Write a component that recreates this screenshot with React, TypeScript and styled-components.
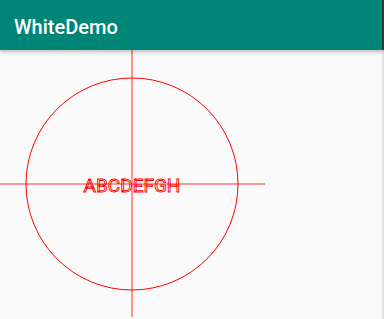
import React from "react";
import styled, { createGlobalStyle } from "styled-components";

const Global = createGlobalStyle`
  html, body { margin: 0; padding: 0; background: #fafafa; }
  body { font-family: Roboto, "Noto Sans", sans-serif; overflow: hidden; }
`;

const Screen = styled.div`
  width: 384px;
  height: 319px;
  display: flex;
  flex-direction: column;
  background: #fafafa;
  overflow: hidden;
`;

const Toolbar = styled.header`
  height: 50px;
  flex: none;
  display: flex;
  align-items: center;
  padding-left: 14px;
  background: #008577;
  border-right: 2px solid #2e3b38;
  box-shadow: 0 2px 4px rgba(0, 0, 0, 0.25);
  position: relative;
  z-index: 1;
`;

const Title = styled.h1`
  margin: 0;
  font-family: Roboto, "Noto Sans", sans-serif;
  font-weight: 500;
  font-size: 20px;
  line-height: 1;
  color: #ffffff;
  padding-top: 4px;
`;

const Content = styled.main`
  flex: 1;
  border-right: 2px solid #e2e2e2;
`;

const Canvas = styled.svg`
  display: block;
  width: 382px;
  height: 269px;
`;

const CX = 132;
const CY = 134;
const R = 106;

export default function App() {
  return (
    <>
      <Global />
      <Screen>
        <Toolbar>
          <Title>WhiteDemo</Title>
        </Toolbar>
        <Content>
          <Canvas viewBox="0 0 382 269">
            <line x1={CX} y1={0} x2={CX} y2={267} stroke="#ff3030" strokeWidth={1} />
            <line x1={0} y1={CY} x2={265} y2={CY} stroke="#ff3030" strokeWidth={1} />
            <circle cx={CX} cy={CY} r={R} fill="none" stroke="#ff0000" strokeWidth={1} />
            <text
              x={CX}
              y={142}
              textAnchor="middle"
              fontFamily="Roboto, 'Noto Sans', sans-serif"
              fontSize={19}
              fill="none"
              stroke="#ff0000"
              strokeWidth={0.9}
            >
              ABCDEFGH
            </text>
          </Canvas>
        </Content>
      </Screen>
    </>
  );
}
